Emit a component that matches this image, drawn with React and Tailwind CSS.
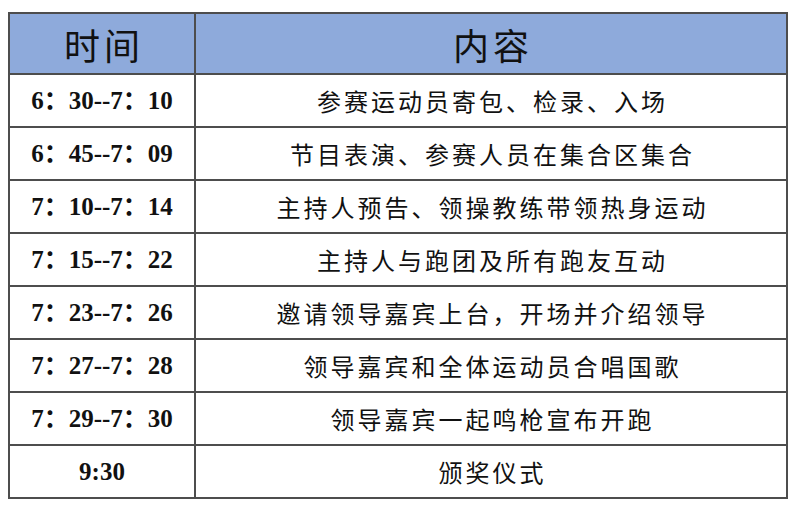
import React from "react";

const rows = [
  ["6：30--7：10", "参赛运动员寄包、检录、入场"],
  ["6：45--7：09", "节目表演、参赛人员在集合区集合"],
  ["7：10--7：14", "主持人预告、领操教练带领热身运动"],
  ["7：15--7：22", "主持人与跑团及所有跑友互动"],
  ["7：23--7：26", "邀请领导嘉宾上台，开场并介绍领导"],
  ["7：27--7：28", "领导嘉宾和全体运动员合唱国歌"],
  ["7：29--7：30", "领导嘉宾一起鸣枪宣布开跑"],
  ["9:30", "颁奖仪式"],
];

const cjk = "font-['Noto_Sans_CJK_SC',sans-serif]";
const num = "font-['Liberation_Serif','Noto_Sans_CJK_SC',serif]";

export default function App() {
  return (
    <div className="w-[800px] h-[505px] bg-white pt-[12px] pl-[8px] overflow-hidden">
      <table className="w-[780px] border-collapse table-fixed text-[#111]">
        <colgroup>
          <col className="w-[186px]" />
          <col />
        </colgroup>
        <thead>
          <tr className="h-[61px] bg-[#8eaadb]">
            <th className={`border-2 border-[#4d4d4d] text-[36px] font-normal tracking-[4px] pl-[4px] ${cjk}`}>
              时间
            </th>
            <th className={`border-2 border-[#4d4d4d] text-[36px] font-normal tracking-[4px] pl-[4px] ${cjk}`}>
              内容
            </th>
          </tr>
        </thead>
        <tbody>
          {rows.map(([time, text]) => (
            <tr key={time} className="h-[53px]">
              <td className={`border-2 border-[#4d4d4d] text-center text-[25px] font-bold ${num}`}>
                {time}
              </td>
              <td className={`border-2 border-[#4d4d4d] text-center text-[24px] tracking-[3px] pl-[3px] ${cjk}`}>
                {text}
              </td>
            </tr>
          ))}
        </tbody>
      </table>
    </div>
  );
}
